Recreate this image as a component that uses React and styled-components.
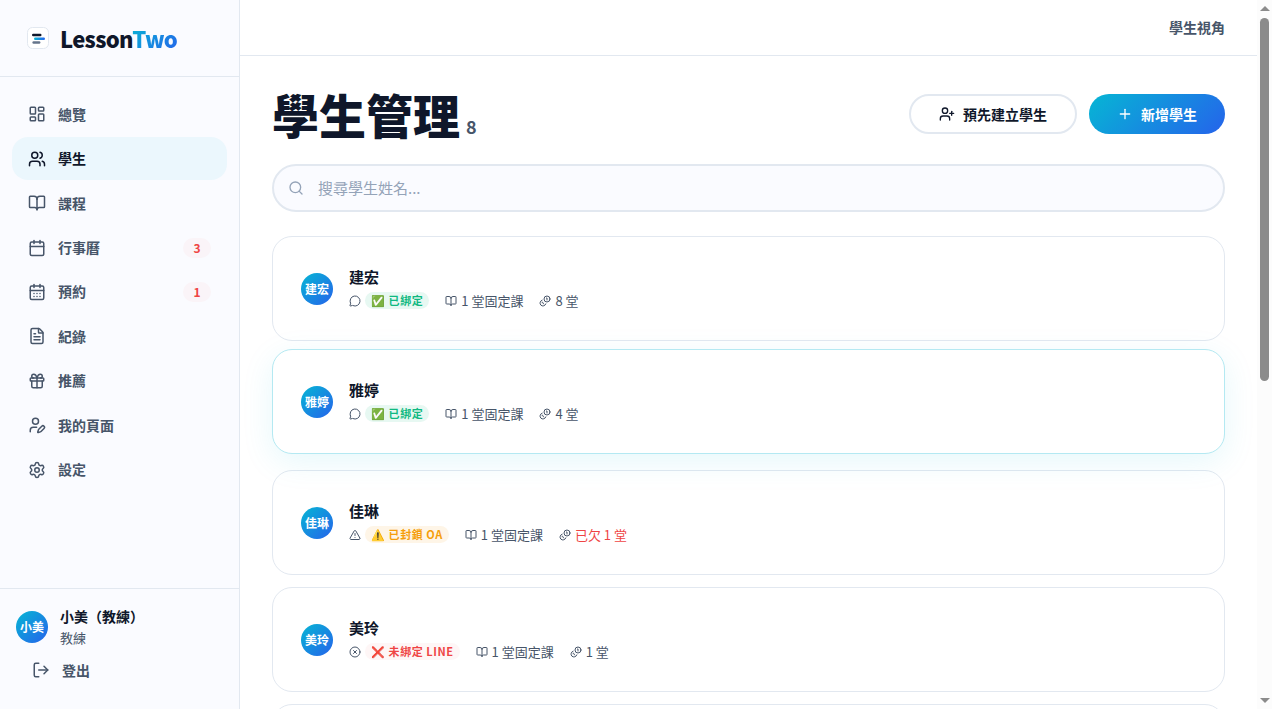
import React, { useState } from 'react';
import styled, { createGlobalStyle, css } from 'styled-components';
import {
  BookOpen,
  Calendar,
  CalendarDays,
  CircleX,
  FileText,
  Gift,
  LayoutDashboard,
  LogOut,
  MessageCircle,
  Plus,
  Search,
  Settings,
  TriangleAlert,
  UserPen,
  UserPlus,
  Users,
} from 'lucide-react';

const GlobalStyle = createGlobalStyle`
  * {
    box-sizing: border-box;
  }

  body {
    margin: 0;
    background: #ffffff;
    color: #0f172a;
    font-family: "Noto Sans CJK TC", "Noto Sans", sans-serif;
    font-size: 14px;
  }

  button, input {
    font-family: inherit;
  }
`;

const gradient = 'linear-gradient(135deg, #06b6d4, #2563eb)';

// Page shell
const Layout = styled.div`
  display: flex;
  height: 100vh;
  overflow: hidden;
`;

// Sidebar
const Sidebar = styled.aside`
  display: flex;
  flex-direction: column;
  flex: 0 0 240px;
  background: #fafbff;
  border-right: 1px solid #e2e8f0;
`;

const Brand = styled.div`
  display: flex;
  align-items: center;
  gap: 8px;
  height: 77px;
  padding: 0 24px;
  border-bottom: 1px solid #e2e8f0;
`;

const BrandName = styled.span`
  font-size: 22px;
  font-weight: 900;
  line-height: 30px;
  letter-spacing: -0.03em;
`;

const BrandAccent = styled.span`
  background: ${gradient};
  background-clip: text;
  -webkit-background-clip: text;
  color: transparent;
`;

const Nav = styled.nav`
  flex: 1;
  padding: 16px 12px;
`;

const NavList = styled.ul`
  display: grid;
  grid-auto-rows: 1fr;
  gap: 2px;
  height: 398px;
  margin: 0;
  padding: 0;
  list-style: none;
`;

const navRow = css`
  display: flex;
  align-items: center;
  gap: 12px;
  width: 100%;
  padding: 0 16px;
  font-size: 14px;
  font-weight: 700;
  line-height: 21px;
  color: #475569;
`;

const NavLink = styled.a`
  ${navRow}
  height: 100%;
  border-radius: 16px;
  text-decoration: none;
  ${({ $active }) =>
    $active &&
    css`
      background: #ebf7fd;
      color: #0f172a;
    `}
`;

const NavCount = styled.span`
  min-width: 28px;
  margin-left: auto;
  border-radius: 10px;
  background: #faf4f8;
  color: #ef4444;
  font-size: 12px;
  line-height: 20px;
  text-align: center;
`;

const SidebarFooter = styled.div`
  padding: 16px;
  border-top: 1px solid #e2e8f0;
`;

const Profile = styled.div`
  display: flex;
  align-items: center;
  gap: 12px;
`;

const ProfileName = styled.div`
  font-size: 14px;
  font-weight: 700;
  line-height: 22px;
`;

const ProfileRole = styled.div`
  color: #475569;
  font-size: 13px;
  line-height: 22px;
`;

const LogoutButton = styled.button`
  ${navRow}
  height: 42px;
  margin-bottom: 2px;
  border: none;
  background: none;
  cursor: pointer;
`;

const Avatar = styled.div`
  display: flex;
  align-items: center;
  justify-content: center;
  flex: 0 0 32px;
  height: 32px;
  border-radius: 50%;
  background: ${gradient};
  color: #ffffff;
  font-size: 12px;
  font-weight: 700;
  line-height: 16px;
`;

// Main column
const Main = styled.div`
  display: flex;
  flex-direction: column;
  flex: 1;
  min-width: 0;
`;

const TopBar = styled.header`
  display: flex;
  align-items: center;
  justify-content: flex-end;
  flex: 0 0 56px;
  padding: 0 32px;
  border-bottom: 1px solid #e2e8f0;
`;

const TopLink = styled.a`
  color: #475569;
  font-size: 14px;
  font-weight: 700;
  line-height: 21px;
  text-decoration: none;
`;

const Content = styled.main`
  display: flex;
  flex-direction: column;
  gap: 24px;
  flex: 1;
  min-height: 0;
  padding: 32px;
  overflow-y: auto;
  scrollbar-width: none;
`;

const PageHeader = styled.div`
  display: flex;
  align-items: center;
  justify-content: space-between;
`;

const TitleGroup = styled.div`
  display: flex;
  align-items: baseline;
  gap: 6px;
`;

const Title = styled.h1`
  margin: 0;
  font-size: 47px;
  font-weight: 900;
  line-height: 52px;
`;

const TitleCount = styled.span`
  color: #475569;
  font-size: 18px;
  font-weight: 700;
`;

const Actions = styled.div`
  display: flex;
  gap: 12px;
`;

const Button = styled.button`
  display: flex;
  align-items: center;
  gap: 8px;
  height: 40px;
  padding: 0 28px;
  border: 2px solid #e2e8f0;
  border-radius: 20px;
  background: #ffffff;
  color: #0f172a;
  font-size: 14px;
  font-weight: 700;
  line-height: 21px;
  cursor: pointer;
  ${({ $primary }) =>
    $primary &&
    css`
      border: none;
      background: ${gradient};
      color: #ffffff;
    `}
`;

const SearchBox = styled.label`
  display: flex;
  align-items: center;
  gap: 14px;
  flex: 0 0 48px;
  padding: 0 14px;
  border: 2px solid #e2e8f0;
  border-radius: 24px;
  background: #fafbff;
  color: #94a3b8;
`;

const SearchInput = styled.input`
  flex: 1;
  min-width: 0;
  padding: 0;
  border: none;
  outline: none;
  background: none;
  color: #0f172a;
  font-size: 15px;
  line-height: 24px;

  &::placeholder {
    color: #94a3b8;
  }
`;

const StudentList = styled.ul`
  display: flex;
  flex-direction: column;
  gap: 12px;
  margin: 0;
  padding: 0;
  list-style: none;
`;

const StudentCard = styled.li`
  display: flex;
  align-items: center;
  gap: 16px;
  min-height: 105px;
  padding: 28px;
  border: 1px solid #e2e8f0;
  border-radius: 20px;
  background: #ffffff;
  ${({ $lifted }) =>
    $lifted &&
    css`
      border-color: #b4e9f2;
      box-shadow: 0 8px 32px rgba(6, 182, 212, 0.1);
      transform: translateY(-4px);
    `}
`;

const StudentName = styled.div`
  font-size: 15px;
  font-weight: 700;
  line-height: 24px;
`;

const Meta = styled.div`
  display: flex;
  align-items: center;
  gap: 16px;
  color: #475569;
  font-size: 13px;
  line-height: 23px;
`;

const MetaItem = styled.span`
  display: flex;
  align-items: center;
  gap: 4px;
`;

const Owed = styled.span`
  color: #ef4444;
`;

const badgeTones = {
  success: { background: '#e7f8f2', color: '#10b981' },
  warning: { background: '#fef5e7', color: '#f59e0b' },
  danger: { background: '#fef6f6', color: '#ef4444' },
};

const Badge = styled.span`
  padding: 0 6px;
  border-radius: 9px;
  background: ${({ $tone }) => badgeTones[$tone].background};
  color: ${({ $tone }) => badgeTones[$tone].color};
  font-size: 11px;
  font-weight: 700;
  line-height: 17px;
  letter-spacing: 0.05em;
`;

// Scroll rail on the right edge
const Rail = styled.div`
  display: flex;
  flex-direction: column;
  align-items: center;
  justify-content: space-between;
  flex: 0 0 15px;
  padding: 6px 0;
  background: #fcfcfc;
`;

const RailTrack = styled.div`
  flex: 1;
  width: 9px;
  margin: 7px 0;
`;

const RailThumb = styled.div`
  height: 54%;
  border-radius: 5px;
  background: #8b8b8b;
`;

const RailArrow = styled.div`
  border: 5px solid transparent;
  border-width: ${({ $down }) => ($down ? '5px 5px 0' : '0 5px 5px')};
  border-${({ $down }) => ($down ? 'top' : 'bottom')}-color: #8b8b8b;
`;

const Coins = ({ size = 24 }) => (
  <svg
    width={size}
    height={size}
    viewBox="0 0 24 24"
    fill="none"
    stroke="currentColor"
    strokeWidth="2"
    strokeLinecap="round"
    strokeLinejoin="round"
    aria-hidden="true"
  >
    <path d="M13.744 17.736a6 6 0 1 1-7.48-7.48" />
    <path d="M15 6h1v4" />
    <path d="m6.134 14.768.866-.5 2 3.464" />
    <circle cx="16" cy="8" r="6" />
  </svg>
);

const Logo = () => (
  <svg width="28" height="28" viewBox="0 0 28 28" aria-hidden="true">
    <defs>
      <linearGradient id="logoBar" x1="0" x2="1">
        <stop offset="0" stopColor="#06b6d4" />
        <stop offset="1" stopColor="#2563eb" />
      </linearGradient>
    </defs>
    <rect x="3.5" y="3.5" width="21" height="21" rx="5" fill="#fff" stroke="#e2e8f0" />
    <rect x="8" y="9.8" width="9.5" height="2.4" rx="1.2" fill="#0f172a" />
    <rect x="10" y="13.6" width="11" height="2.4" rx="1.2" fill="url(#logoBar)" />
    <rect x="8.4" y="17.3" width="8" height="2.4" rx="1.2" fill="#64748b" />
  </svg>
);

const navItems = [
  { label: '總覽', icon: LayoutDashboard },
  { label: '學生', icon: Users, active: true },
  { label: '課程', icon: BookOpen },
  { label: '行事曆', icon: Calendar, count: 3 },
  { label: '預約', icon: CalendarDays, count: 1 },
  { label: '紀錄', icon: FileText },
  { label: '推薦', icon: Gift },
  { label: '我的頁面', icon: UserPen },
  { label: '設定', icon: Settings },
];

const statuses = {
  bound: { icon: MessageCircle, tone: 'success', label: '✅ 已綁定' },
  blocked: { icon: TriangleAlert, tone: 'warning', label: '⚠️ 已封鎖 OA' },
  unbound: { icon: CircleX, tone: 'danger', label: '❌ 未綁定 LINE' },
};

const students = [
  { name: '建宏', status: 'bound', left: 8 },
  { name: '雅婷', status: 'bound', left: 4, lifted: true },
  { name: '佳琳', status: 'blocked', left: -1 },
  { name: '美玲', status: 'unbound', left: 1 },
];

const Student = ({ student }) => {
  const status = statuses[student.status];
  const StatusIcon = status.icon;

  return (
    <StudentCard $lifted={student.lifted}>
      <Avatar>{student.name}</Avatar>
      <div>
        <StudentName>{student.name}</StudentName>
        <Meta>
          <MetaItem>
            <StatusIcon size={12} />
            <Badge $tone={status.tone}>{status.label}</Badge>
          </MetaItem>
          <MetaItem>
            <BookOpen size={12} />
            1 堂固定課
          </MetaItem>
          <MetaItem>
            <Coins size={12} />
            {student.left < 0 ? <Owed>已欠 {-student.left} 堂</Owed> : `${student.left} 堂`}
          </MetaItem>
        </Meta>
      </div>
    </StudentCard>
  );
};

const App = () => {
  const [query, setQuery] = useState('');
  const visible = students.filter((student) => student.name.includes(query));

  return (
    <>
      <GlobalStyle />
      <Layout>
        <Sidebar>
          <Brand>
            <Logo />
            <BrandName>
              Lesson<BrandAccent>Two</BrandAccent>
            </BrandName>
          </Brand>
          <Nav>
            <NavList>
              {navItems.map(({ label, icon: Icon, active, count }) => (
                <li key={label}>
                  <NavLink href="#" $active={active}>
                    <Icon size={18} />
                    {label}
                    {count && <NavCount>{count}</NavCount>}
                  </NavLink>
                </li>
              ))}
            </NavList>
          </Nav>
          <SidebarFooter>
            <Profile>
              <Avatar>小美</Avatar>
              <div>
                <ProfileName>小美（教練）</ProfileName>
                <ProfileRole>教練</ProfileRole>
              </div>
            </Profile>
            <LogoutButton type="button">
              <LogOut size={18} />
              登出
            </LogoutButton>
          </SidebarFooter>
        </Sidebar>

        <Main>
          <TopBar>
            <TopLink href="#">學生視角</TopLink>
          </TopBar>
          <Content>
            <PageHeader>
              <TitleGroup>
                <Title>學生管理</Title>
                <TitleCount>8</TitleCount>
              </TitleGroup>
              <Actions>
                <Button type="button">
                  <UserPlus size={16} />
                  預先建立學生
                </Button>
                <Button type="button" $primary>
                  <Plus size={16} />
                  新增學生
                </Button>
              </Actions>
            </PageHeader>
            <SearchBox>
              <Search size={16} />
              <SearchInput
                type="text"
                aria-label="搜尋學生姓名"
                placeholder="搜尋學生姓名..."
                value={query}
                onChange={(event) => setQuery(event.target.value)}
              />
            </SearchBox>
            <StudentList>
              {visible.map((student) => (
                <Student key={student.name} student={student} />
              ))}
              <StudentCard aria-hidden="true" />
            </StudentList>
          </Content>
        </Main>

        <Rail aria-hidden="true">
          <RailArrow />
          <RailTrack>
            <RailThumb />
          </RailTrack>
          <RailArrow $down />
        </Rail>
      </Layout>
    </>
  );
};

export default App;
